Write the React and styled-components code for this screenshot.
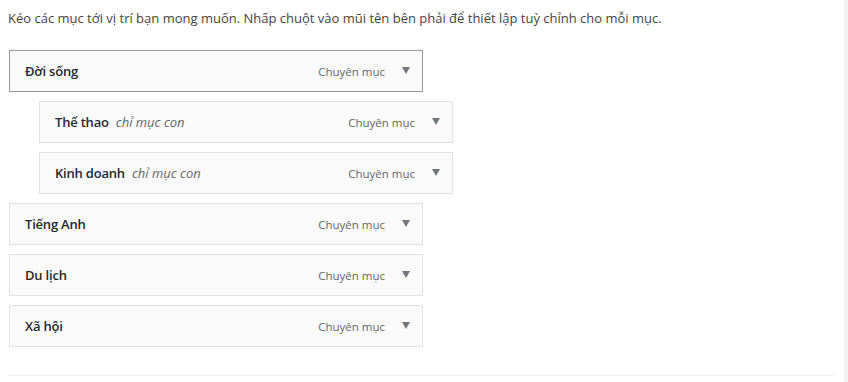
import React from "react";
import styled, { createGlobalStyle } from "styled-components";

const GlobalStyle = createGlobalStyle`
    body {
        margin: 0;
        background: #ffffff;
        font-family: 'Open Sans', 'Noto Sans', sans-serif;
        font-size: 13px;
        color: #444444;
    }
`

const Page = styled.div`
    display: flex;
    height: 382px;
    overflow: hidden;
`

const Main = styled.div`
    flex: 1;
    background: #ffffff;
    padding: 8px 10px 0 8px;
`

const Strip = styled.div`
    width: 4px;
    background: #f1f1f1;
`

const Intro = styled.p`
    margin: 0;
    line-height: 20px;
    color: #444444;
`

const List = styled.ul`
    list-style: none;
    margin: 22px 0 0 0;
    padding: 0;
`

const Row = styled.li`
    margin: 9px 0 0 ${p => 1 + p.depth * 30}px;
`

const Handle = styled.div`
    display: flex;
    align-items: center;
    box-sizing: border-box;
    width: 414px;
    height: 42px;
    padding: 0 12px 0 15px;
    background: #fafafa;
    border: 1px solid ${p => (p.active ? "#999999" : "#e2e2e2")};
`

const Title = styled.span`
    flex: 1;
    font-weight: 600;
    color: #23282d;
    letter-spacing: -0.2px;
    white-space: nowrap;
`

const SubLabel = styled.em`
    font-weight: 400;
    font-style: italic;
    color: #666666;
    letter-spacing: 0;
    margin-left: 7px;
`

const Type = styled.span`
    font-size: 11.5px;
    color: #666666;
    margin-right: 17px;
`

const Toggle = styled.span`
    display: inline-block;
    width: 0;
    height: 0;
    border-left: 4.5px solid transparent;
    border-right: 4.5px solid transparent;
    border-top: 7px solid #72777c;
    margin-bottom: 2px;
`

const Footer = styled.div`
    margin-top: 28px;
    border-top: 1px solid #eeeeee;
`

const items = [
    { title: "Đời sống", depth: 0, active: true },
    { title: "Thể thao", depth: 1, sub: true },
    { title: "Kinh doanh", depth: 1, sub: true },
    { title: "Tiếng Anh", depth: 0 },
    { title: "Du lịch", depth: 0 },
    { title: "Xã hội", depth: 0 },
]

export default function App() {
    return (
        <Page>
            <GlobalStyle />
            <Main>
                <Intro>Kéo các mục tới vị trí bạn mong muốn. Nhấp chuột vào mũi tên bên phải để thiết lập tuỳ chỉnh cho mỗi mục.</Intro>
                <List>
                    {items.map(item => (
                        <Row key={item.title} depth={item.depth}>
                            <Handle active={item.active}>
                                <Title>
                                    {item.title}
                                    {item.sub && <SubLabel>chỉ mục con</SubLabel>}
                                </Title>
                                <Type>Chuyên mục</Type>
                                <Toggle />
                            </Handle>
                        </Row>
                    ))}
                </List>
                <Footer />
            </Main>
            <Strip />
        </Page>
    );
}
